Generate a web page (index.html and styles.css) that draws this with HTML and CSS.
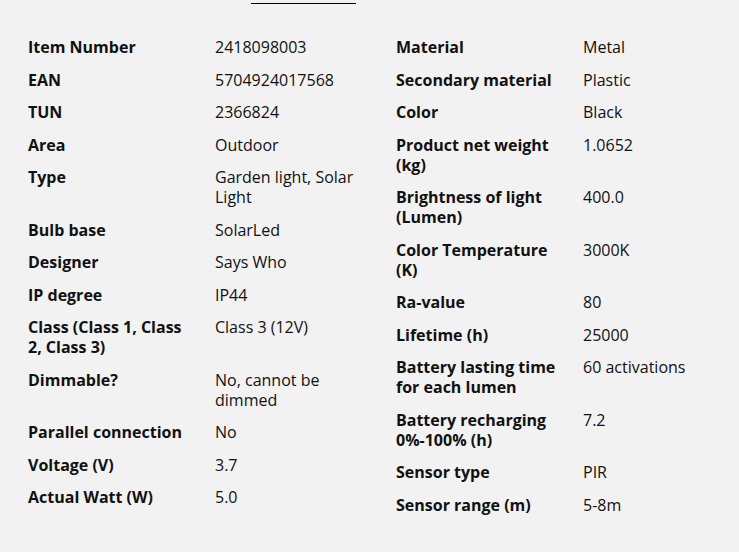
FILE: index.html
```html
<!DOCTYPE html>
<html>
<head>
<meta charset="utf-8">
<link rel="stylesheet" href="styles.css">
</head>
<body>
<div class="tabs"><span class="tab-active"></span></div>
<div class="specs">
  <dl class="table">
    <dt>Item Number</dt><dd>2418098003</dd>
    <dt>EAN</dt><dd>5704924017568</dd>
    <dt>TUN</dt><dd>2366824</dd>
    <dt>Area</dt><dd>Outdoor</dd>
    <dt>Type</dt><dd>Garden light, Solar Light</dd>
    <dt>Bulb base</dt><dd>SolarLed</dd>
    <dt>Designer</dt><dd>Says Who</dd>
    <dt>IP degree</dt><dd>IP44</dd>
    <dt>Class (Class 1, Class 2, Class 3)</dt><dd>Class 3 (12V)</dd>
    <dt>Dimmable?</dt><dd>No, cannot be dimmed</dd>
    <dt>Parallel connection</dt><dd>No</dd>
    <dt>Voltage (V)</dt><dd>3.7</dd>
    <dt>Actual Watt (W)</dt><dd>5.0</dd>
  </dl>
  <dl class="table">
    <dt>Material</dt><dd>Metal</dd>
    <dt>Secondary material</dt><dd>Plastic</dd>
    <dt>Color</dt><dd>Black</dd>
    <dt>Product net weight (kg)</dt><dd>1.0652</dd>
    <dt>Brightness of light (Lumen)</dt><dd>400.0</dd>
    <dt>Color Temperature (K)</dt><dd>3000K</dd>
    <dt>Ra-value</dt><dd>80</dd>
    <dt>Lifetime (h)</dt><dd>25000</dd>
    <dt>Battery lasting time for each lumen</dt><dd>60 activations</dd>
    <dt>Battery recharging 0%-100% (h)</dt><dd>7.2</dd>
    <dt>Sensor type</dt><dd>PIR</dd>
    <dt>Sensor range (m)</dt><dd>5-8m</dd>
  </dl>
</div>
</body>
</html>
```
FILE: styles.css
```css
html, body {
  margin: 0;
  padding: 0;
  background: #f2f2f2;
}
body {
  font-family: "Open Sans", "Noto Sans", sans-serif;
  font-size: 16px;
  color: #111;
  width: 739px;
  height: 552px;
  overflow: hidden;
}
.tabs {
  height: 28px;
  padding-left: 251px;
  box-sizing: border-box;
}
.tab-active {
  display: block;
  width: 105px;
  height: 0;
  margin-top: 3px;
  border-top: 1.5px solid #000;
}
.specs {
  display: flex;
  gap: 10px;
  padding-left: 28px;
}
.table {
  display: grid;
  grid-template-columns: 187px 171px;
  margin: 0;
  align-content: start;
}
.table dt, .table dd {
  margin: 0;
  padding: 6.25px 16px 6.25px 0;
  line-height: 20px;
}
.table dt {
  font-weight: 700;
}
```
